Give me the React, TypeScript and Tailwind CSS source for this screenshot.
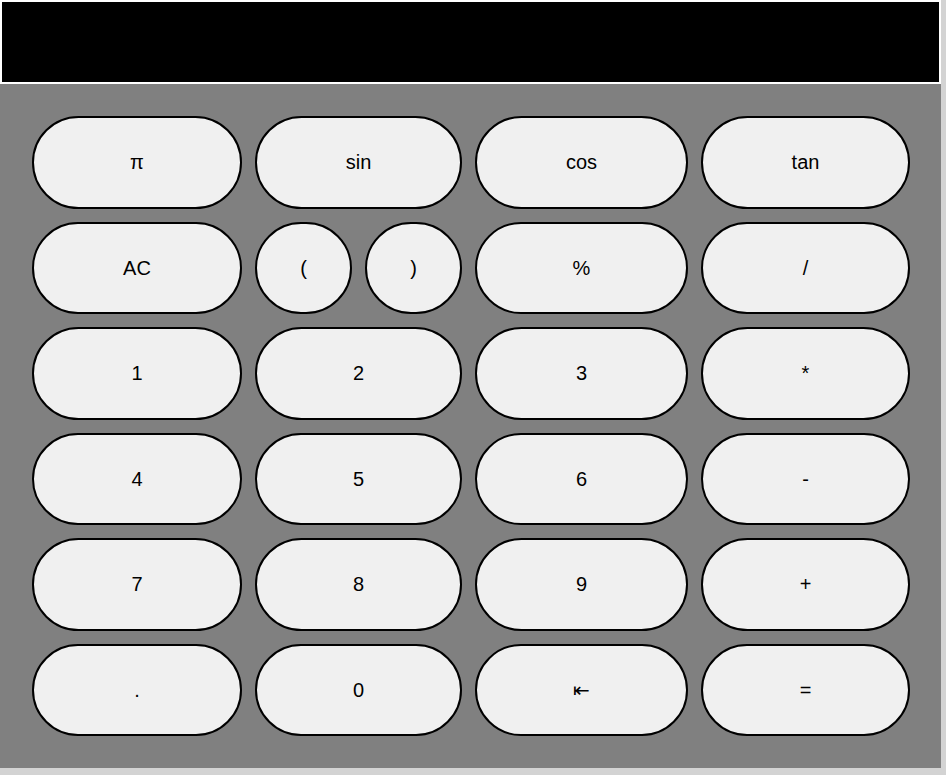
const rows: string[][] = [
  ["π", "sin", "cos", "tan"],
  ["AC", "()", "%", "/"],
  ["1", "2", "3", "*"],
  ["4", "5", "6", "-"],
  ["7", "8", "9", "+"],
  [".", "0", "⇤", "="],
];

function Key({ label, className = "" }: { label: string; className?: string }) {
  return (
    <button
      className={`h-full rounded-full border-2 border-black bg-[#f0f0f0] text-[20px] text-black ${className}`}
    >
      {label}
    </button>
  );
}

export default function App() {
  return (
    <div
      className="min-h-screen bg-[#d3d3d3]"
      style={{ fontFamily: '"Liberation Sans", Arial, sans-serif' }}
    >
      <div className="w-[941px]">
        <div className="h-[84px] border-2 border-white bg-black" />
        <div className="bg-[#808080] p-[32px]">
          <div className="grid grid-cols-[210px_207px_213px_209px] auto-rows-[92.5px] gap-x-[13px] gap-y-[13px]">
            {rows.flat().map((k, i) =>
              k === "()" ? (
                <div key={i} className="flex h-full gap-[13px]">
                  <Key label="(" className="flex-1" />
                  <Key label=")" className="flex-1" />
                </div>
              ) : (
                <Key key={i} label={k} className="w-full" />
              )
            )}
          </div>
        </div>
      </div>
    </div>
  );
}
